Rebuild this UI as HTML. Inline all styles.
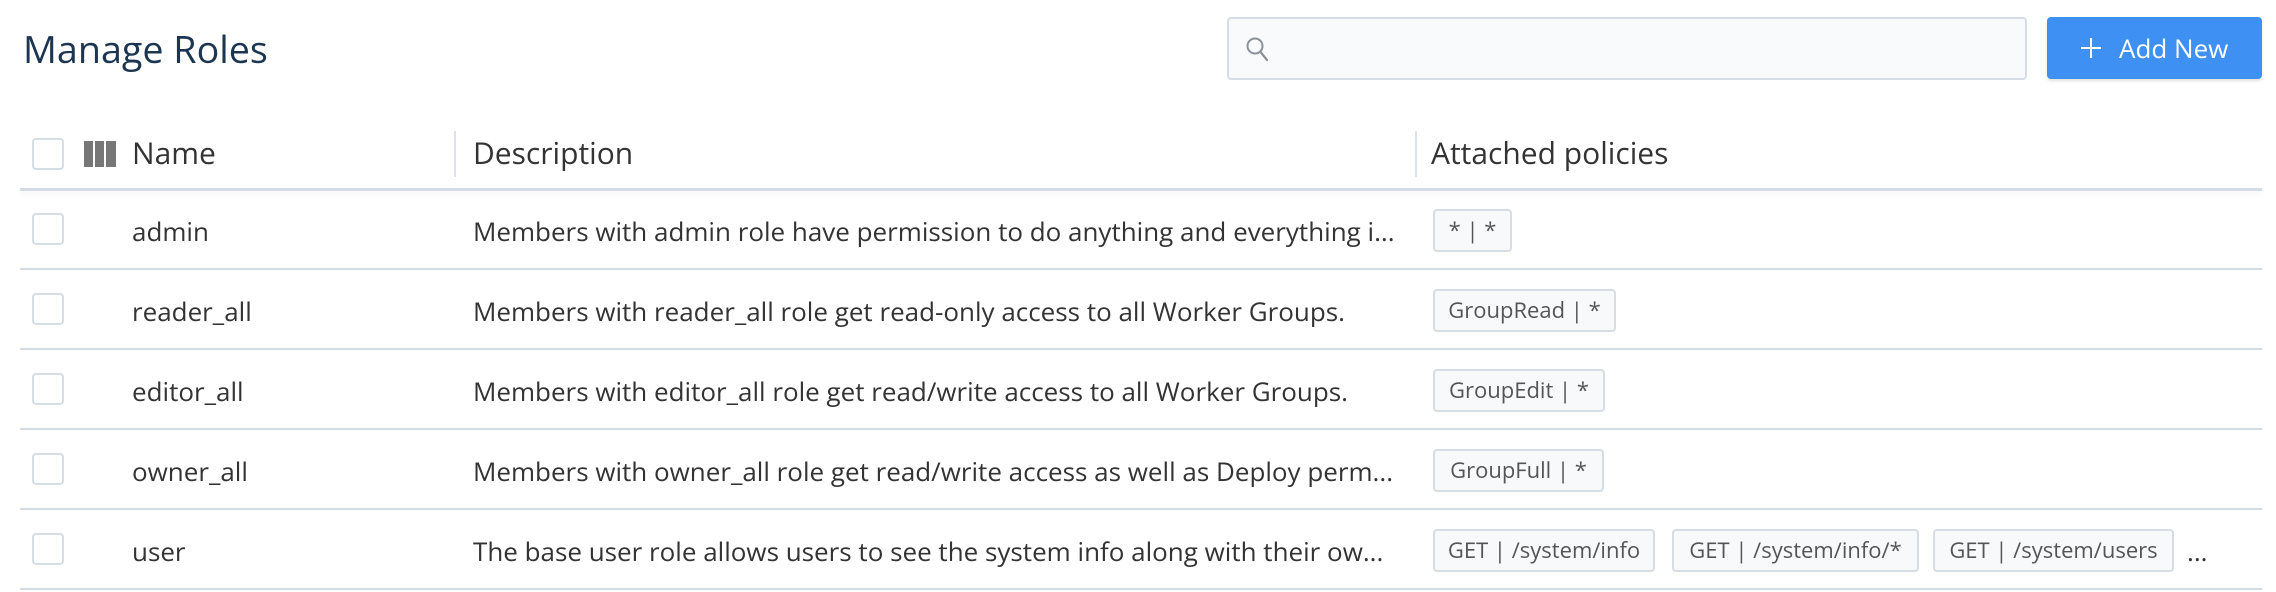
<!DOCTYPE html>
<html><head><meta charset="utf-8"><style>
body{margin:0;width:2276px;height:592px;background:#fff;position:relative;overflow:hidden;font-family:"Open Sans","Liberation Sans",sans-serif;color:#333}
.a{position:absolute;white-space:nowrap}
.t{font-size:37.7px;color:#1c3550;left:23px;top:24px}
.search{left:1227px;top:17px;width:796px;height:59px;border:2px solid #d6dde4;border-radius:4px;background:#f9fafc}
.btn{left:2047px;top:17px;width:215px;height:62px;background:#3e91f3;border-radius:4px;color:#fff;font-size:26px;box-shadow:0 2px 3px rgba(0,0,0,.12)}
.cb{position:absolute;left:32px;width:28px;height:28px;border:2px solid #d5dde5;border-radius:4px;background:#fff}
.h{font-size:30px;color:#333;top:132px}
.sep{position:absolute;width:2px;height:46px;top:131px;background:#dde3e8}
.line{position:absolute;left:20px;width:2242px;height:2px;background:#d3dce4}
.r{font-size:26px;color:#333}
.tag{position:absolute;height:39px;border:2px solid #d6dde4;border-radius:4px;background:#f8f9fb;font-size:22px;color:#555;line-height:39px;text-align:center;box-sizing:content-box}
</style></head><body>
<div class="a t">Manage Roles</div>
<div class="a search"><svg style="position:absolute;left:16px;top:17px" width="26" height="28" viewBox="0 0 26 28"><circle cx="10" cy="10" r="7.5" fill="none" stroke="#8a9198" stroke-width="2"/><path d="M15.5 16 L22 24" stroke="#8a9198" stroke-width="2.2" stroke-linecap="round"/></svg></div>
<div class="a btn"><svg style="position:absolute;left:34px;top:21px" width="20" height="20"><path d="M10 0V20M0 10H20" stroke="#fff" stroke-width="2"/></svg><span style="position:absolute;left:72px;top:13px">Add New</span></div>

<div class="cb" style="top:138px"></div>
<svg style="position:absolute;left:84px;top:141px" width="32" height="26"><rect x="0" y="0" width="9" height="26" fill="#777"/><rect x="11" y="0" width="9" height="26" fill="#777"/><rect x="22" y="0" width="10" height="26" fill="#777"/></svg>
<div class="a h" style="left:132px">Name</div>
<div class="sep" style="left:454px"></div>
<div class="a h" style="left:473px">Description</div>
<div class="sep" style="left:1415px"></div>
<div class="a h" style="left:1431px">Attached policies</div>
<div class="line" style="top:188px;height:3px;box-shadow:0 3px 6px rgba(0,0,0,.06)"></div>

<div class="cb" style="top:213px"></div>
<div class="a r" style="left:132px;top:213px">admin</div>
<div class="a r" style="left:473px;top:213px">Members with admin role have permission to do anything and everything i...</div>
<div class="tag" style="left:1433px;top:209px;width:75px">* | *</div>
<div class="line" style="top:268px"></div>

<div class="cb" style="top:293px"></div>
<div class="a r" style="left:132px;top:293px">reader_all</div>
<div class="a r" style="left:473px;top:293px">Members with reader_all role get read-only access to all Worker Groups.</div>
<div class="tag" style="left:1433px;top:289px;width:179px">GroupRead | *</div>
<div class="line" style="top:348px"></div>

<div class="cb" style="top:373px"></div>
<div class="a r" style="left:132px;top:373px">editor_all</div>
<div class="a r" style="left:473px;top:373px">Members with editor_all role get read/write access to all Worker Groups.</div>
<div class="tag" style="left:1433px;top:369px;width:168px">GroupEdit | *</div>
<div class="line" style="top:428px"></div>

<div class="cb" style="top:453px"></div>
<div class="a r" style="left:132px;top:453px">owner_all</div>
<div class="a r" style="left:473px;top:453px">Members with owner_all role get read/write access as well as Deploy perm...</div>
<div class="tag" style="left:1433px;top:449px;width:167px">GroupFull | *</div>
<div class="line" style="top:508px"></div>

<div class="cb" style="top:533px"></div>
<div class="a r" style="left:132px;top:533px">user</div>
<div class="a r" style="left:473px;top:533px">The base user role allows users to see the system info along with their ow...</div>
<div class="tag" style="left:1433px;top:529px;width:218px">GET | /system/info</div>
<div class="tag" style="left:1672px;top:529px;width:243px">GET | /system/info/*</div>
<div class="tag" style="left:1933px;top:529px;width:237px">GET | /system/users</div>
<div class="a r" style="left:2187px;top:533px">...</div>
<div class="line" style="top:588px"></div>
</body></html>
